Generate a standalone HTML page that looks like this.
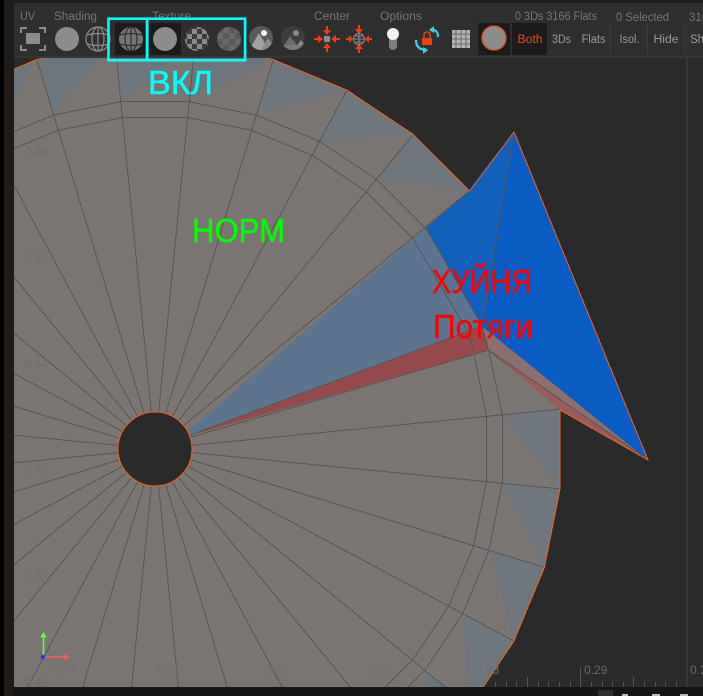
<!DOCTYPE html>
<html><head><meta charset="utf-8">
<style>
html,body{margin:0;padding:0;background:#2a2a2a;width:703px;height:696px;overflow:hidden}
svg{display:block;font-family:"Liberation Sans",sans-serif;overflow:hidden}
</style></head><body>
<svg width="703" height="696" viewBox="0 0 703 696" xmlns="http://www.w3.org/2000/svg">
<defs>
<clipPath id="vp"><rect x="14" y="58" width="689" height="629"/></clipPath>
<clipPath id="c3"><circle cx="261" cy="38" r="12"/></clipPath>
<clipPath id="c4"><circle cx="293" cy="38" r="12"/></clipPath>
<pattern id="chk" width="10" height="10" patternUnits="userSpaceOnUse" x="192" y="34"><rect width="10" height="10" fill="#8a8a8a"/><rect width="5" height="5" fill="#3c3c3c"/><rect x="5" y="5" width="5" height="5" fill="#3c3c3c"/></pattern>
<pattern id="chk2" width="12" height="12" patternUnits="userSpaceOnUse" x="223" y="33"><rect width="12" height="12" fill="#6a6a6a"/><rect width="6" height="6" fill="#5a5a5a"/><rect x="6" y="6" width="6" height="6" fill="#5a5a5a"/></pattern>
</defs>
<rect width="703" height="696" fill="#2a2a2a"/>

<g clip-path="url(#vp)">
<polygon points="468,189 512,134 514,136 472,192" fill="#063f59"/>
<polygon points="14,69 36.8,59.5 44.4,58 265.4,58 273,59.5 347,90 413,134 470,191 426,228 482,326 488,350 560,409 560,489 544.5,567 514,641 483.3,687 14,687" fill="#7a7572"/>

<g fill="#6f757d">
<polygon points="14,99.7 14,69 36.8,59.5"/>
<polygon points="53.7,115 36.8,59.5 44.4,58 103,58"/>
<polygon points="120.8,101.7 116.5,58 176.9,58"/>
<polygon points="189.2,101.7 193.5,58 265.4,58 273.2,59.5"/>
<polygon points="256.3,115 273.2,59.5 346.9,90.1"/>
<polygon points="319.5,141.2 346.9,90.1 413.2,134.4"/>
<polygon points="376.4,179.2 413.2,134.4 469.6,190.8"/>
<polygon points="502.3,414.8 560,409.1 560,488.9"/>
<polygon points="502.3,483.2 560,488.9 544.5,567.2"/>
<polygon points="489,550.3 544.5,567.2 513.9,640.9"/>
<polygon points="462.8,613.5 513.9,640.9 483.3,687 468.1,687"/>
<polygon points="424.8,670.4 445,687 422.7,687"/>
</g>

<polygon points="188,431 413,239 426,228 482,326 188,436" fill="#5d7491"/>
<polygon points="188,436 482,326 488.5,350" fill="#974a4b"/>
<polygon points="482,326 488.5,350 648,460" fill="#8a6f6e"/>
<polygon points="488.5,350 560,410 648,460" fill="#9a5a5a"/>
<polygon points="470,191 514,132 484,323 482,326 426,228" fill="#1060bc"/>
<polygon points="514,132 648,460 482,326 484,323" fill="#085cc4"/>

<g stroke="#575552" stroke-width="1" fill="none" shape-rendering="crispEdges">
<path d="M155 449L193.5 58M155 449L273.2 59.5M155 449L346.9 90.1M155 449L413.2 134.4M155 449L469.6 190.8M155 449L560 409.1M155 449L560 488.9M155 449L544.5 567.2M155 449L513.9 640.9M155 449L445 687M155 449L350.3 687M155 449L282.2 687M155 449L227.2 687M155 449L178.4 687M155 449L131.6 687M155 449L82.8 687M155 449L27.8 687M155 449L14 620.8M155 449L14 564.7M155 449L14 524.4M155 449L14 491.8M155 449L14 462.9M155 449L14 435.1M155 449L14 406.2M155 449L14 373.6M155 449L14 333.3M155 449L14 277.2M155 449L14 185.2M155 449L36.8 59.5M155 449L116.5 58"/>
<polyline points="188,436 482,326 514,132"/>
<polyline points="188,438 488.5,350 648,460"/>
<polyline points="14,131.5 53.7,115 120.8,101.7 189.2,101.7 256.3,115 319.5,141.2 376.4,179.2 424.8,227.6 426,228 482,326 488.5,350 502.3,414.8 502.3,483.2 489,550.3 462.8,613.5 424.8,670.4 408.2,687"/>
<polyline points="14,148.7 58.3,130.3 122.4,117.6 187.6,117.6 251.7,130.3 312,155.3 366.3,191.6 412.4,237.7 468,332 473.7,352.3 486.4,416.4 486.4,481.6 473.7,545.7 448.7,606 412.4,660.3 385.7,687"/>
</g>

<g fill="none" stroke="#f0601c" stroke-width="1" shape-rendering="crispEdges">
<polyline points="14,69 36.8,59.5 44.4,58"/>
<polyline points="265.4,58 273.2,59.5 346.9,90.1 413.2,134.4 469.6,191 514,132 648,460 560,410 560,488.9 544.5,567.2 513.9,640.9 483.3,687"/>
</g>
<circle cx="155" cy="449" r="37" fill="#2a2a2a" stroke="#f0601c" stroke-width="1.1"/>

<g font-size="12" fill="#716d6a">
<text x="35" y="75" font-size="11">cm</text>
<text x="25" y="155">0.46</text><text x="25" y="262">0.45</text><text x="25" y="368">0.44</text><text x="25" y="474">0.43</text><text x="25" y="581">0.42</text><text x="25" y="686">0.41</text>
<text x="52" y="674">0.24</text><text x="158" y="674">0.25</text><text x="265" y="674">0.26</text><text x="370" y="674">0.27</text><text x="476" y="674">0.28</text>
</g>
<g fill="#6a6a6a" font-size="12"><text x="584" y="674">0.29</text><text x="690" y="674">0.3</text></g>
<g stroke="#565656" stroke-width="1" shape-rendering="crispEdges">
<line x1="580.5" y1="667" x2="580.5" y2="687"/>
<line x1="687" y1="58" x2="687" y2="687" stroke="#454545"/>
<line x1="527.5" y1="677" x2="527.5" y2="687"/><line x1="633.5" y1="677" x2="633.5" y2="687"/>
<path d="M495.5 682V687M506.5 682V687M516.5 682V687M538.5 682V687M548.5 682V687M559.5 682V687M570.5 682V687M591.5 682V687M602.5 682V687M612.5 682V687M623.5 682V687M644.5 682V687M655.5 682V687M665.5 682V687M676.5 682V687"/>
</g>

<g stroke-width="1.6" fill="none">
<line x1="43.5" y1="656" x2="43.5" y2="635" stroke="#5fff4a"/>
<path d="M41 637L43.5 633L46 637Z" fill="#5fff4a" stroke="#5fff4a" stroke-width="1"/>
<line x1="45" y1="657" x2="66" y2="657" stroke="#ff5a5a"/>
<path d="M64 654.5L68 657L64 659.5Z" fill="#ff5a5a" stroke="#ff5a5a" stroke-width="1"/>
<circle cx="43" cy="657" r="2.2" fill="#3030ff" stroke="none"/>
</g>
</g>

<!-- frame -->
<rect x="0" y="0" width="4" height="696" fill="#000"/>
<rect x="4" y="58" width="6" height="638" fill="#231a16"/>
<rect x="10" y="58" width="4" height="638" fill="#1c1c1c"/>
<rect x="14" y="687" width="689" height="9" fill="#151515"/>
<rect x="598" y="690" width="15" height="6" fill="#2e2e2e"/>
<rect x="622" y="694" width="6" height="2" fill="#bbb"/><rect x="652" y="694" width="8" height="2" fill="#bbb"/><rect x="680" y="694" width="8" height="2" fill="#bbb"/>

<!-- toolbar -->
<rect x="4" y="0" width="10" height="58" fill="#1c1c1c"/>
<rect x="14" y="0" width="689" height="58" fill="#2f2f2f"/>
<rect x="14" y="0" width="689" height="3" fill="#1e1e1e"/>
<rect x="14" y="56" width="689" height="2" fill="#363636"/>

<g font-size="11.5" fill="#777">
<text x="20" y="20" textLength="15" lengthAdjust="spacingAndGlyphs">UV</text>
<text x="54" y="20" textLength="43" lengthAdjust="spacingAndGlyphs">Shading</text>
<text x="152" y="20" textLength="39" lengthAdjust="spacingAndGlyphs">Texture</text>
<text x="314" y="20" textLength="36" lengthAdjust="spacingAndGlyphs">Center</text>
<text x="380" y="20" textLength="42" lengthAdjust="spacingAndGlyphs">Options</text>
<text x="515" y="20" textLength="82" lengthAdjust="spacingAndGlyphs">0 3Ds 3166 Flats</text>
<text x="616" y="21" textLength="53" lengthAdjust="spacingAndGlyphs">0 Selected</text>
<text x="689" y="21">316</text>
</g>

<rect x="115" y="23" width="32" height="32" fill="#1b1b1b"/>
<rect x="149" y="23" width="32" height="32" fill="#1b1b1b"/>
<rect x="478" y="23" width="32" height="32" fill="#1b1b1b"/>
<rect x="512" y="23" width="35" height="32" fill="#1b1b1b"/>

<!-- fit icon -->
<path d="M21 33V28H27M39 28H45V33M45 45V50H39M27 50H21V45" fill="none" stroke="#8c8c8c" stroke-width="2"/>
<rect x="26" y="33" width="14" height="11" fill="#8c8c8c"/>
<circle cx="67" cy="39" r="12" fill="#8c8c8c"/>

<g fill="none" stroke="#8c8c8c" stroke-width="1.2">
<circle cx="98" cy="39" r="12"/><ellipse cx="98" cy="39" rx="6" ry="12"/>
<path d="M86.5 35Q98 32 109.5 35M86.5 44Q98 47 109.5 44M98 27V51"/>
</g>
<circle cx="131" cy="39" r="12" fill="#767676"/>
<g fill="none" stroke="#2e2e2e" stroke-width="1.2">
<ellipse cx="131" cy="39" rx="6" ry="12"/>
<path d="M119.5 35Q131 32 142.5 35M119.5 44Q131 47 142.5 44M131 27V51"/>
</g>
<circle cx="165" cy="39" r="12" fill="#8c8c8c"/>
<circle cx="197" cy="39" r="12" fill="url(#chk)"/>
<circle cx="229" cy="39" r="12" fill="url(#chk2)"/>

<circle cx="261" cy="38" r="12" fill="#5a5a5a"/>
<g clip-path="url(#c3)">
<polygon points="248,52 259,33 270,52" fill="#a2a2a2"/><polygon points="260,52 268,38 278,52" fill="#8a8a8a"/>
</g>
<circle cx="264" cy="33" r="3" fill="#fff"/>

<circle cx="293" cy="38" r="12" fill="#3e3e3e"/>
<g clip-path="url(#c4)">
<polygon points="280,52 290,36 302,52" fill="#6a6a6a"/><polygon points="292,52 301,40 310,52" fill="#8a8a8a"/><rect x="281" y="45" width="24" height="7" fill="#7a7a7a"/>
</g>
<circle cx="296" cy="33" r="3" fill="#8a8a8a"/>

<!-- cyan boxes -->
<g fill="none" stroke="#00ffff" stroke-width="2.6">
<rect x="108.5" y="18.7" width="38.6" height="41.6"/>
<rect x="147.1" y="18.7" width="98" height="41.6"/>
</g>

<!-- center icons -->
<rect x="324" y="36" width="6" height="6" fill="#8c8c8c"/>
<g fill="#ee3f10">
<path d="M326 26H328V30H331L327 35L323 30H326Z"/>
<path d="M326 52H328V48H331L327 43L323 48H326Z"/>
<path d="M314 38H318V35L323 39L318 43V40H314Z"/>
<path d="M340 38H336V35L331 39L336 43V40H340Z"/>
<path d="M358 26H360V30H363L359 35L355 30H358Z" transform="translate(0 -1)"/>
<path d="M358 52H360V48H363L359 43L355 48H358Z" transform="translate(0 1)"/>
<path d="M346 38H349V35L353 39L349 43V40H346Z"/>
<path d="M372 38H369V35L365 39L369 43V40H372Z"/>
</g>
<g fill="none" stroke="#8c8c8c" stroke-width="1"><circle cx="359" cy="39" r="5.5"/><path d="M353.5 39H364.5M359 33.5V44.5M355 35.5Q359 37 363 35.5M355 42.5Q359 41 363 42.5"/></g>

<!-- bulb -->
<rect x="389" y="34" width="8" height="16" rx="4" fill="#7e7e7e"/>
<circle cx="393" cy="34" r="6" fill="#f4f4f4"/>

<!-- lock -->
<rect x="422" y="38" width="10" height="7" fill="#ee3f10"/>
<path d="M424 38V35Q424 32 427 32Q430 32 430 35V38" fill="none" stroke="#ee3f10" stroke-width="1.5"/>
<g fill="none" stroke="#3fd0e8" stroke-width="2.2"><path d="M431 30Q438 29 438 37"/><path d="M427 50Q416 50 416 40"/></g>
<path d="M434 26V33L429 30Z" fill="#3fd0e8"/><path d="M423 47V54L428 50Z" fill="#3fd0e8"/>

<!-- grid -->
<rect x="452" y="30" width="18" height="18" fill="#b4b4b4"/>
<path d="M452 34H470M452 39H470M452 44H470M456 30V48M461 30V48M466 30V48" stroke="#666" stroke-width="1" fill="none"/>
<circle cx="494" cy="38" r="12" fill="#8c8c8c" stroke="#e8501c" stroke-width="1.3"/>

<g font-size="11.5">
<text x="517.5" y="43" fill="#ef4512" textLength="25" lengthAdjust="spacingAndGlyphs">Both</text>
<g fill="#9a9a9a">
<text x="552" y="43" textLength="19" lengthAdjust="spacingAndGlyphs">3Ds</text>
<text x="581.5" y="43" textLength="24" lengthAdjust="spacingAndGlyphs">Flats</text>
<text x="619.5" y="43" textLength="20" lengthAdjust="spacingAndGlyphs">Isol.</text>
<text x="653.5" y="43" textLength="25" lengthAdjust="spacingAndGlyphs">Hide</text>
<text x="690" y="43">Sh</text>
</g>
</g>
<path d="M610.5 23V55M647.5 23V55M684.5 23V55" stroke="#3c3c3c" stroke-width="1"/>

<!-- annotation text -->
<g font-size="33" stroke-width=".4">
<text x="148" y="94" fill="#00ffff" stroke="#00ffff" textLength="65" lengthAdjust="spacingAndGlyphs">ВКЛ</text>
<text x="192" y="242" fill="#00ff00" stroke="#00ff00" textLength="93" lengthAdjust="spacingAndGlyphs">НОРМ</text>
<text x="432" y="293" fill="#ff0000" stroke="#ff0000" textLength="100" lengthAdjust="spacingAndGlyphs">ХУЙНЯ</text>
<text x="433" y="338" fill="#ff0000" stroke="#ff0000" textLength="100" lengthAdjust="spacingAndGlyphs">Потяги</text>
</g>
</svg>
</body></html>
